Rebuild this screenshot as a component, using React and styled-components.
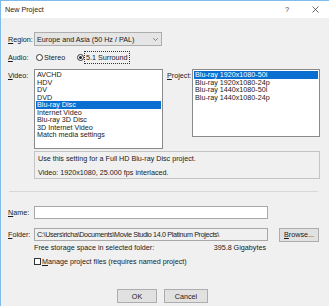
import React from 'react';
import styled, { createGlobalStyle } from 'styled-components';

const GlobalStyle = createGlobalStyle`
  html, body {
    margin: 0;
    padding: 0;
    background: #f0f0f0;
  }
  body {
    font-family: "Liberation Sans", Arial, sans-serif;
    font-size: 7.2px;
    color: #1a1a1a;
  }
`

const Window = styled.div`
  width: 329px;
  height: 306px;
  box-sizing: border-box;
  border-top: 1px solid #7fbcec;
  border-left: 1px solid #7fbcec;
  background: #f0f0f0;
  display: flex;
  flex-direction: column;
  overflow: hidden;
`
const TitleBar = styled.div`
  height: 17px;
  background: #fff;
  display: flex;
  align-items: center;
  padding-left: 4px;
  flex-shrink: 0;
`
const Title = styled.span`
  flex: 1;
  font-size: 7.2px;
  color: #222;
`
const TitleButton = styled.span`
  width: 28px;
  display: flex;
  justify-content: center;
  align-items: center;
  color: #444;
  font-size: 7.5px;
`
const Body = styled.div`
  padding: 14px 9px 0 7px;
  display: flex;
  flex-direction: column;
`
const Row = styled.div`
  display: flex;
  align-items: ${({ $top }) => ($top ? 'flex-start' : 'center')};
  height: ${({ $h }) => $h}px;
  margin-top: ${({ $mt }) => $mt || 0}px;
`
const Label = styled.span`
  width: ${({ $w }) => $w || 26}px;
  flex-shrink: 0;
  padding-top: ${({ $pt }) => $pt || 0}px;
`
const Key = styled.span`
  text-decoration: underline;
`
const Combo = styled.div`
  width: 128px;
  height: 14px;
  box-sizing: border-box;
  border: 1px solid #adadad;
  background: #e5e5e5;
  display: flex;
  align-items: center;
  padding: 0 3px 0 2px;
  justify-content: space-between;
`
const Radio = styled.span`
  width: 7px;
  height: 7px;
  box-sizing: border-box;
  border-radius: 50%;
  border: 1px solid #333;
  background: #fff;
  display: inline-flex;
  align-items: center;
  justify-content: center;
  margin: 0 1px 0 2px;
  &::after {
    content: '';
    width: 3px;
    height: 3px;
    border-radius: 50%;
    background: ${({ $on }) => ($on ? '#222' : 'transparent')};
  }
`
const RadioGroup = styled.div`
  display: flex;
  align-items: center;
  width: ${({ $w }) => $w}px;
`
const Focus = styled.span`
  outline: 1px dotted #333;
  padding: 1px 1px;
`
const ListBox = styled.div`
  width: ${({ $w }) => $w}px;
  height: ${({ $h }) => $h}px;
  box-sizing: border-box;
  border: 1px solid #8a8a8a;
  background: #fff;
  padding: 1px;
`
const Item = styled.div`
  height: 7.5px;
  line-height: 7.5px;
  padding-left: 1px;
  white-space: nowrap;
  background: ${({ $sel }) => ($sel ? '#0a6fd0' : 'transparent')};
  color: ${({ $sel }) => ($sel ? '#fff' : '#1a1a1a')};
`
const Spacer = styled.div`
  width: ${({ $w }) => $w}px;
  flex-shrink: 0;
`
const InfoBox = styled.div`
  margin: 2px 0 0 26px;
  height: 28px;
  box-sizing: border-box;
  border: 1px solid #c4c4c4;
  padding: 2px 3px;
  display: flex;
  flex-direction: column;
  gap: 5px;
`
const Separator = styled.div`
  height: 1px;
  background: #d8d8d8;
  margin: 12px 2px 0 1px;
`
const TextInput = styled.div`
  width: ${({ $w }) => $w}px;
  height: ${({ $h }) => $h || 13}px;
  box-sizing: border-box;
  border: 1px solid #a8a8a8;
  background: ${({ $ro }) => ($ro ? '#f0f0f0' : '#fff')};
  display: flex;
  align-items: center;
  padding-left: 2px;
  white-space: nowrap;
  overflow: hidden;
  letter-spacing: ${({ $ls }) => $ls || 0}px;
`
const Button = styled.div`
  width: ${({ $w }) => $w || 40}px;
  height: 14px;
  box-sizing: border-box;
  border: 1px solid #adadad;
  background: #e1e1e1;
  display: flex;
  align-items: center;
  justify-content: center;
  margin-left: ${({ $ml }) => $ml || 0}px;
`
const StorageRow = styled.div`
  display: flex;
  margin: 2px 0 0 26px;
  width: 232px;
  justify-content: space-between;
  height: 9px;
  align-items: center;
`
const CheckBox = styled.span`
  width: 7px;
  height: 7px;
  box-sizing: border-box;
  border: 1px solid #333;
  background: #fff;
  margin-right: 1px;
`
const Footer = styled.div`
  display: flex;
  justify-content: flex-start;
  padding-left: 109px;
  margin-top: 23px;
`

const videos = ['AVCHD', 'HDV', 'DV', 'DVD', 'Blu-ray Disc', 'Internet Video', 'Blu-ray 3D Disc', '3D Internet Video', 'Match media settings'];
const projects = ['Blu-ray 1920x1080-50i', 'Blu-ray 1920x1080-24p', 'Blu-ray 1440x1080-50i', 'Blu-ray 1440x1080-24p'];

const App = () => {
  return (
    <>
      <GlobalStyle />
      <Window>
        <TitleBar>
          <Title>New Project</Title>
          <TitleButton>?</TitleButton>
          <TitleButton>
            <svg width="7" height="7" viewBox="0 0 7 7">
              <path d="M0.5 0.5 L6.5 6.5 M6.5 0.5 L0.5 6.5" stroke="#444" strokeWidth="0.8" />
            </svg>
          </TitleButton>
        </TitleBar>
        <Body>
          <Row $h={14}>
            <Label><Key>R</Key>egion:</Label>
            <Combo>
              <span>Europe and Asia (50 Hz / PAL)</span>
              <svg width="5" height="3" viewBox="0 0 5 3">
                <path d="M0.3 0.3 L2.5 2.5 L4.7 0.3" fill="none" stroke="#555" strokeWidth="0.7" />
              </svg>
            </Combo>
          </Row>
          <Row $h={12} $mt={5}>
            <Label><Key>A</Key>udio:</Label>
            <RadioGroup $w={41}><Radio />Stereo</RadioGroup>
            <RadioGroup $w={60}><Radio $on /><Focus>5.1 Surround</Focus></RadioGroup>
          </Row>
          <Row $h={80} $mt={6} $top>
            <Label $pt={2}><Key>V</Key>ideo:</Label>
            <ListBox $w={129} $h={80}>
              {videos.map((v, i) => <Item key={v} $sel={i === 4}>{v}</Item>)}
            </ListBox>
            <Spacer $w={4} />
            <Label $w={25} $pt={2}><Key>P</Key>roject:</Label>
            <ListBox $w={128} $h={68}>
              {projects.map((p, i) => <Item key={p} $sel={i === 0}>{p}</Item>)}
            </ListBox>
          </Row>
          <InfoBox>
            <span>Use this setting for a Full HD Blu-ray Disc project.</span>
            <span>Video: 1920x1080, 25.000 fps interlaced.</span>
          </InfoBox>
          <Separator />
          <Row $h={13} $mt={14}>
            <Label><Key>N</Key>ame:</Label>
            <TextInput $w={234} />
          </Row>
          <Row $h={13} $mt={9}>
            <Label><Key>F</Key>older:</Label>
            <TextInput $w={234} $ro $ls={-0.35}>C:\Users\richa\Documents\Movie Studio 14.0 Platinum Projects\</TextInput>
            <Button $ml={11}><span><Key>B</Key>rowse...</span></Button>
          </Row>
          <StorageRow>
            <span>Free storage space in selected folder:</span>
            <span>395.8 Gigabytes</span>
          </StorageRow>
          <Row $h={10} $mt={4}>
            <Spacer $w={26} />
            <CheckBox />
            <span><Key>M</Key>anage project files (requires named project)</span>
          </Row>
          <Footer>
            <Button>OK</Button>
            <Button $ml={7} $w={44}>Cancel</Button>
          </Footer>
        </Body>
      </Window>
    </>
  );
};

export default App;
